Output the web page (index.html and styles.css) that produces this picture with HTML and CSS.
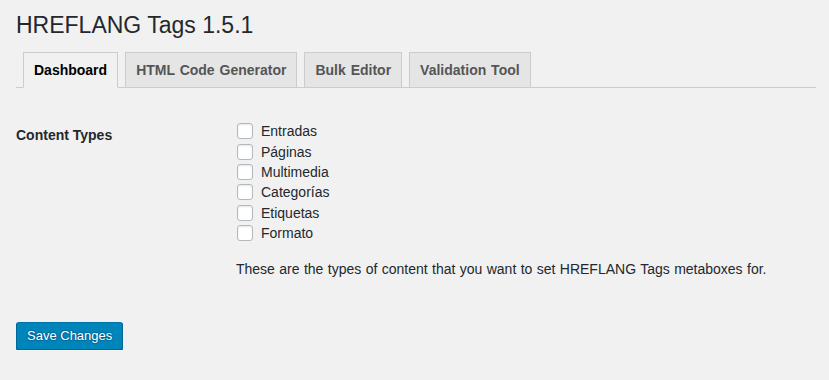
FILE: index.html
```html
<!DOCTYPE html>
<html lang="en">
<head>
    <meta charset="UTF-8">
    <title>HREFLANG Tags</title>
    <link rel="stylesheet" href="styles.css">
</head>
<body>
    <div class="wrap">
        <h1>HREFLANG Tags 1.5.1</h1>

        <nav class="nav-tab-wrapper">
            <a class="nav-tab nav-tab-active" href="#">Dashboard</a>
            <a class="nav-tab" href="#">HTML Code Generator</a>
            <a class="nav-tab" href="#">Bulk Editor</a>
            <a class="nav-tab" href="#">Validation Tool</a>
        </nav>

        <form>
            <table class="form-table">
                <tbody>
                    <tr>
                        <th>Content Types</th>
                        <td>
                            <fieldset class="checks">
                                <label><input type="checkbox"> Entradas</label>
                                <label><input type="checkbox"> Páginas</label>
                                <label><input type="checkbox"> Multimedia</label>
                                <label><input type="checkbox"> Categorías</label>
                                <label><input type="checkbox"> Etiquetas</label>
                                <label><input type="checkbox"> Formato</label>
                            </fieldset>
                            <p class="description">These are the types of content that you want to set HREFLANG Tags metaboxes for.</p>
                        </td>
                    </tr>
                </tbody>
            </table>
            <p class="submit">
                <button type="button" class="button-primary">Save Changes</button>
            </p>
        </form>
    </div>
</body>
</html>
```

FILE: styles.css
```css
html, body {
    background: #f1f1f1;
}
body {
    margin: 0;
    font-family: "Liberation Sans", Arial, sans-serif;
    font-size: 13px;
    color: #23282d;
}
.wrap {
    margin: 2px 13px 0 16px;
}
h1 {
    font-size: 23px;
    font-weight: 400;
    line-height: 29px;
    margin: 0;
    padding: 9px 0 4px 0;
    color: #23282d;
}
.nav-tab-wrapper {
    display: flex;
    border-bottom: 1px solid #ccc;
    padding-top: 8px;
}
.nav-tab {
    margin-left: 7px;
    padding: 5px 10px;
    border: 1px solid #ccc;
    border-bottom: none;
    background: #e5e5e5;
    color: #555;
    font-size: 14px;
    line-height: 24px;
    font-weight: bold;
    text-decoration: none;
    white-space: nowrap;
    word-spacing: 1px;
}
.nav-tab-active {
    background: #f1f1f1;
    color: #000;
    border-bottom: 1px solid #f1f1f1;
    margin-bottom: -1px;
}
.form-table {
    border-collapse: collapse;
    margin-top: 18px;
}
.form-table th {
    width: 200px;
    padding: 20px 10px 20px 0;
    vertical-align: top;
    text-align: left;
    font-size: 14px;
    font-weight: bold;
    line-height: 1.3;
    color: #23282d;
}
.form-table td {
    padding: 15px 10px;
    vertical-align: top;
    font-size: 14px;
}
.checks {
    border: 0;
    margin: 0;
    padding: 0;
    display: flex;
    flex-direction: column;
}
.checks label {
    display: flex;
    align-items: center;
    height: 20.4px;
    line-height: 20px;
    color: #23282d;
}
.checks input {
    appearance: none;
    width: 16px;
    height: 16px;
    margin: 0 8px 0 1px;
    border: 1px solid #b4b9be;
    border-radius: 3px;
    background: #fff;
    box-shadow: inset 0 1px 2px rgba(0, 0, 0, 0.1);
}
.description {
    margin: 16px 0 0 0;
    font-size: 14px;
    line-height: 20px;
    color: #23282d;
    word-spacing: 0.5px;
}
.submit {
    margin: 28px 0 0 0;
}
.button-primary {
    height: 28px;
    padding: 0 10px 1px;
    font-family: "Liberation Sans", Arial, sans-serif;
    font-size: 13px;
    line-height: 26px;
    color: #fff;
    background: #0085ba;
    border: 1px solid;
    border-color: #0073aa #006799 #006799;
    border-radius: 3px;
    box-shadow: 0 1px 0 #006799;
    text-shadow: 0 -1px 1px #006799, 1px 0 1px #006799, 0 1px 1px #006799, -1px 0 1px #006799;
}
```
